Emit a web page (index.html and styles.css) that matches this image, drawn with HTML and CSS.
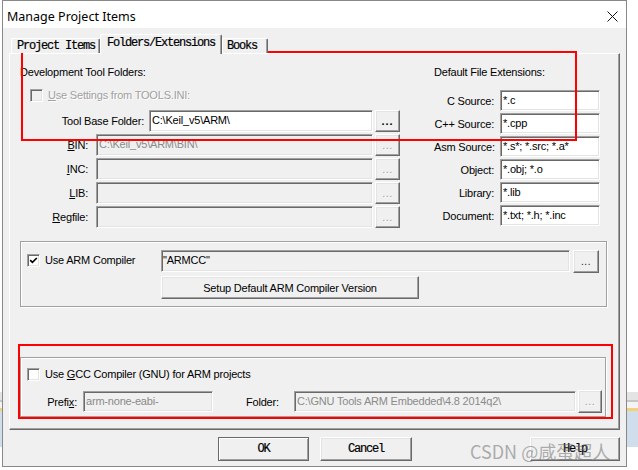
FILE: index.html
```html
<!DOCTYPE html>
<html>
<head>
<meta charset="utf-8">
<title>Manage Project Items</title>
<link rel="stylesheet" href="styles.css">
</head>
<body>
<div class="window">
  <div class="titlebar">
    <span class="title">Manage Project Items</span>
    <svg class="close" width="11" height="11" viewBox="0 0 11 11"><path d="M0.5 0.5L10.5 10.5M10.5 0.5L0.5 10.5" stroke="#111" stroke-width="1" fill="none"/></svg>
  </div>
  <div class="client">
    <div class="tabs">
      <div class="tab tab-project">Project Items</div>
      <div class="tab tab-folders active">Folders/Extensions</div>
      <div class="tab tab-books">Books</div>
    </div>
    <div class="panel">
      <div class="top">
        <div class="left-col">
          <div class="heading">Development Tool Folders:</div>
          <div class="check-row disabled">
            <span class="checkbox off"></span>
            <span class="check-text"><u>U</u>se Settings from TOOLS.INI:</span>
          </div>
          <div class="folder-rows">
            <div class="frow frow-base">
              <span class="lbl">Tool Base Folder:</span>
              <div class="edit">C:\Keil_v5\ARM\</div>
              <div class="btn dots bold">...</div>
            </div>
            <div class="frow">
              <span class="lbl"><u>B</u>IN:</span>
              <div class="edit dis">C:\Keil_v5\ARM\BIN\</div>
              <div class="btn dots dim">...</div>
            </div>
            <div class="frow">
              <span class="lbl"><u>I</u>NC:</span>
              <div class="edit dis"></div>
              <div class="btn dots dim">...</div>
            </div>
            <div class="frow">
              <span class="lbl"><u>L</u>IB:</span>
              <div class="edit dis"></div>
              <div class="btn dots dim">...</div>
            </div>
            <div class="frow">
              <span class="lbl"><u>R</u>egfile:</span>
              <div class="edit dis"></div>
              <div class="btn dots dim">...</div>
            </div>
          </div>
        </div>
        <div class="right-col">
          <div class="heading">Default File Extensions:</div>
          <div class="ext-rows">
            <div class="erow"><span class="lbl">C Source:</span><div class="edit">*.c</div></div>
            <div class="erow"><span class="lbl">C++ Source:</span><div class="edit">*.cpp</div></div>
            <div class="erow"><span class="lbl">Asm Source:</span><div class="edit">*.s*; *.src; *.a*</div></div>
            <div class="erow"><span class="lbl">Object:</span><div class="edit">*.obj; *.o</div></div>
            <div class="erow"><span class="lbl">Library:</span><div class="edit">*.lib</div></div>
            <div class="erow"><span class="lbl">Document:</span><div class="edit">*.txt; *.h; *.inc</div></div>
          </div>
        </div>
      </div>

      <div class="group arm">
        <div class="arm-row">
          <div class="chk-cell">
            <span class="checkbox on"><svg width="11" height="11" viewBox="0 0 11 11"><path d="M2.2 5.2L4.4 7.4L8.8 3" stroke="#000" stroke-width="1.7" fill="none"/></svg></span>
            <span class="check-text">Use ARM Compiler</span>
          </div>
          <div class="edit grey armcc">"ARMCC"</div>
          <div class="btn dots small armbtn">...</div>
        </div>
        <div class="setup-row">
          <div class="btn setup">Setup Default ARM Compiler Version</div>
        </div>
      </div>

      <div class="group gcc">
        <div class="check-row gcc-check">
          <span class="checkbox"></span>
          <span class="check-text">Use <u>G</u>CC Compiler (GNU) for ARM projects</span>
        </div>
        <div class="gcc-row">
          <span class="lbl prefix-lbl">Prefi<u>x</u>:</span>
          <div class="edit dis prefix">arm-none-eabi-</div>
          <span class="lbl folder-lbl">Folder:</span>
          <div class="edit dis folder">C:\GNU Tools ARM Embedded\4.8 2014q2\</div>
          <div class="btn dots dim gccbtn">...</div>
        </div>
      </div>
    </div>
    <div class="buttons">
      <div class="btn dlgbtn default">OK</div>
      <div class="btn dlgbtn cancel">Cancel</div>
      <div class="btn dlgbtn help">Help</div>
    </div>
  </div>
</div>
<div class="mark mark1"></div>
<div class="mark mark2"></div>
<div class="watermark">CSDN @咸蛋超人</div>
</body>
</html>
```

FILE: styles.css
```css
html, body {
  margin: 0;
  padding: 0;
}
body {
  width: 638px;
  height: 470px;
  overflow: hidden;
  position: relative;
  background: linear-gradient(to bottom,
    #ffffff 0, #ffffff 392px,
    #e4e4e4 392px, #e4e4e4 400px,
    #c6c6c6 400px, #c6c6c6 402px,
    #f4f4f4 402px, #f4f4f4 408px,
    #f1d27a 408px, #f1d27a 411px,
    #cfdded 411px, #cfdded 447px,
    #ffffff 447px);
  font-family: "Liberation Sans", Arial, sans-serif;
  font-size: 11px;
  letter-spacing: -0.2px;
  color: #000;
}
.window {
  margin-left: 2px;
  width: 625px;
  height: 467px;
  box-sizing: border-box;
  border: 1px solid #888;
  background: #f0f0f0;
  display: flex;
  flex-direction: column;
}
.titlebar {
  height: 27px;
  flex: none;
  background: #fff;
  display: flex;
  align-items: center;
  padding: 3px 0 0 4px;
  box-sizing: border-box;
}
.title {
  font-family: "Noto Sans", "Liberation Sans", sans-serif;
  font-size: 12.5px;
  letter-spacing: 0;
  color: #000;
}
.close {
  margin-left: auto;
  margin-right: 8px;
}
.client {
  flex: 1;
  padding-top: 6px;
}

/* tabs */
.tabs {
  display: flex;
  align-items: flex-end;
  height: 20px;
  margin-left: 8px;
  margin-bottom: -1px;
  position: relative;
  z-index: 1;
}
.tab {
  box-sizing: border-box;
  height: 15px;
  margin-bottom: 1px;
  border-top: 1px solid #fff;
  border-left: 1px solid #fff;
  border-right: 1px solid #696969;
  border-radius: 2px 2px 0 0;
  box-shadow: inset -1px 0 0 #a0a0a0;
  background: #f0f0f0;
  font-family: "Liberation Mono", "DejaVu Sans Mono", monospace;
  font-size: 12px;
  letter-spacing: -1.2px;
  line-height: 14px;
  white-space: nowrap;
  -webkit-text-stroke: 0.2px #000;
}
.tab-project { width: 89px; padding-left: 5px; }
.tab-folders { width: 122px; padding-left: 6px; }
.tab-books { width: 46px; padding-left: 4px; }
.tab.active {
  height: 20px;
  margin-bottom: 0;
  line-height: 17px;
}

/* panel */
.panel {
  margin-left: 6px;
  width: 611px;
  height: 377px;
  box-sizing: border-box;
  border: 1px solid;
  border-color: #fff #696969 #696969 #fff;
  box-shadow: inset -1px -1px 0 #a0a0a0;
}
.top {
  display: flex;
  padding: 12px 0 0 10px;
}
.left-col {
  width: 380px;
}
.right-col {
  margin-left: 34px;
  width: 166px;
}
.heading {
  height: 13px;
  line-height: 13px;
  white-space: nowrap;
}
.check-row {
  display: flex;
  align-items: center;
  height: 13px;
  margin-top: 10px;
  margin-left: 10px;
}
.check-text {
  margin-left: 5px;
  white-space: nowrap;
  line-height: 13px;
}
.disabled .check-text {
  color: #a0a0a0;
  text-shadow: 1px 1px 0 #fff;
}
.checkbox {
  flex: none;
  width: 13px;
  height: 13px;
  box-sizing: border-box;
  border: 1px solid;
  border-color: #a0a0a0 #fff #fff #a0a0a0;
  box-shadow: inset 1px 1px 0 #696969, inset -1px -1px 0 #e3e3e3;
  background: #fff;
  display: flex;
}
.checkbox.off {
  background: #f0f0f0;
}
.folder-rows {
  margin-top: 8px;
}
.frow {
  display: flex;
  align-items: center;
  height: 22px;
  margin-bottom: 2px;
}
.lbl {
  white-space: nowrap;
}
.frow .lbl {
  flex: 1;
  text-align: right;
  margin-right: 8px;
}
.frow .edit {
  width: 277px;
}
.frow-base .lbl {
  margin-right: 5px;
}
.frow-base .edit {
  width: 224px;
}
.frow .btn {
  width: 25px;
  height: 22px;
  margin-left: 2px;
}

.ext-rows {
  margin-top: 11px;
}
.erow {
  display: flex;
  align-items: center;
  height: 21px;
  margin-bottom: 2px;
}
.erow .lbl {
  width: 60px;
  text-align: right;
  margin-right: 6px;
}
.erow .edit {
  width: 100px;
  height: 21px;
}

/* edit boxes */
.edit {
  flex: none;
  height: 22px;
  box-sizing: border-box;
  border: 1px solid;
  border-color: #a0a0a0 #fff #fff #a0a0a0;
  box-shadow: inset 1px 1px 0 #696969, inset -1px -1px 0 #e3e3e3;
  background: #fff;
  padding-left: 2px;
  line-height: 18px;
  white-space: nowrap;
  overflow: hidden;
}
.edit.dis {
  background: #f0f0f0;
  color: #8a8a8a;
}
.edit.grey {
  background: #f0f0f0;
}

/* buttons */
.btn {
  flex: none;
  box-sizing: border-box;
  border: 1px solid;
  border-color: #fff #696969 #696969 #fff;
  box-shadow: inset -1px -1px 0 #a0a0a0, inset 1px 1px 0 #e3e3e3;
  background: #f0f0f0;
  display: flex;
  align-items: center;
  justify-content: center;
  white-space: nowrap;
}
.dots {
  letter-spacing: 0.5px;
  padding-bottom: 1px;
}
.dots.bold {
  font-weight: bold;
  letter-spacing: 1px;
}
.dots.dim {
  color: #a0a0a0;
  text-shadow: 1px 1px 0 #fff;
}
.dots.small {
  font-size: 10px;
  color: #201030;
}

/* group boxes */
.group {
  margin-left: 10px;
  box-sizing: border-box;
  border: 1px solid #a0a0a0;
  box-shadow: 1px 1px 0 #fff, inset 1px 1px 0 #fff;
}
.arm {
  margin-top: 11px;
  width: 587px;
  height: 66px;
  padding: 8px 0 0 6px;
}
.arm-row {
  display: flex;
  align-items: flex-start;
  height: 23px;
}
.chk-cell {
  width: 134px;
  height: 23px;
  display: flex;
  align-items: center;
  padding-bottom: 2px;
  box-sizing: border-box;
}
.armcc {
  width: 409px;
  padding-left: 1px;
}
.armbtn {
  width: 26px;
  height: 23px;
  margin-left: 3px;
}
.setup-row {
  margin-top: 3px;
  padding-left: 134px;
}
.setup {
  width: 258px;
  height: 23px;
}
.gcc {
  margin-top: 50px;
  width: 586px;
  height: 60px;
  padding: 10px 0 0 6px;
}
.gcc-check {
  margin: 0;
}
.gcc-row {
  display: flex;
  align-items: center;
  height: 23px;
  margin-top: 9px;
}
.prefix-lbl {
  width: 50px;
  text-align: right;
  margin-right: 6px;
}
.prefix {
  width: 130px;
  height: 21px;
}
.folder-lbl {
  width: 48px;
  margin-left: 33px;
}
.folder {
  width: 282px;
  height: 21px;
}
.gccbtn {
  width: 24px;
  height: 23px;
  margin-left: 2px;
}

/* dialog buttons */
.buttons {
  display: flex;
  margin-top: 7px;
  padding-left: 215px;
}
.dlgbtn {
  height: 24px;
  font-family: "Liberation Mono", "DejaVu Sans Mono", monospace;
  font-size: 12px;
  letter-spacing: -1.2px;
  -webkit-text-stroke: 0.2px #000;
}
.dlgbtn.default {
  width: 91px;
  border-color: #696969;
  box-shadow: inset 1px 1px 0 #fff, inset -1px -1px 0 #a0a0a0;
}
.dlgbtn.cancel {
  width: 92px;
  margin-left: 11px;
}
.dlgbtn.help {
  width: 90px;
  margin-left: 118px;
}

/* annotations over the screenshot */
.mark {
  position: absolute;
  box-sizing: border-box;
  border: 2px solid #f00;
}
.mark1 {
  left: 21px;
  top: 51px;
  width: 556px;
  height: 90px;
}
.mark2 {
  left: 18px;
  top: 344px;
  width: 595px;
  height: 75px;
}
.watermark {
  position: absolute;
  left: 470px;
  top: 441px;
  font-family: "Noto Sans CJK SC", "Noto Sans", sans-serif;
  font-size: 18px;
  line-height: 20px;
  letter-spacing: 0;
  color: rgba(110, 110, 110, 0.55);
  white-space: nowrap;
}
```
